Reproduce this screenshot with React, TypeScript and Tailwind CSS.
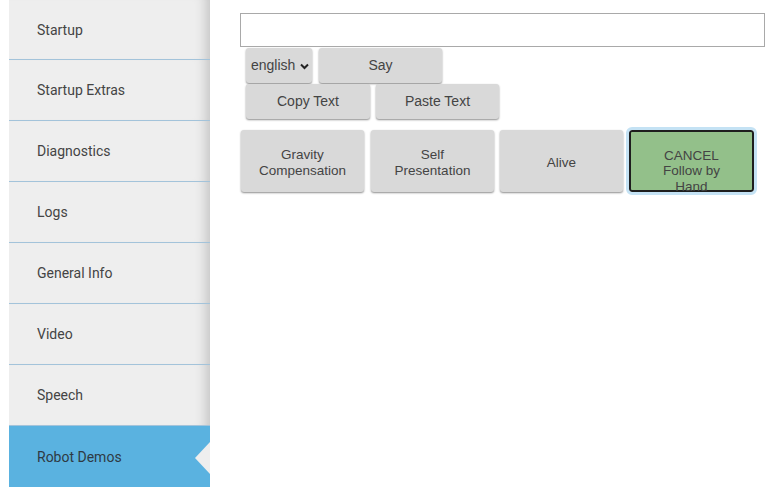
import React from "react";

const items = [
  "Startup",
  "Startup Extras",
  "Diagnostics",
  "Logs",
  "General Info",
  "Video",
  "Speech",
];

const btn =
  "flex items-center justify-center text-center rounded-[3px] bg-[#d9d9d9] text-[#444] text-[13.5px] leading-[15.3px] shadow-[0_1px_2px_rgba(0,0,0,0.45)]";

export default function App() {
  return (
    <div
      className="flex h-[487px] w-[778px] overflow-hidden bg-white"
      style={{ fontFamily: "'Liberation Sans', Arial, sans-serif" }}
    >
      <div className="ml-[9px] flex w-[201px] shrink-0 flex-col bg-[#eeeeee] font-['Roboto',sans-serif] text-[14px] text-[#444]">
        {items.map((t, i) => (
          <div
            key={t}
            className={`flex items-center border-b border-[#a3c3da] pl-[28px] pt-[1px] shadow-[inset_-14px_0_12px_-10px_rgba(0,0,0,0.18)] ${
              i === 0 ? "h-[60px]" : "h-[61px]"
            }`}
          >
            {t}
          </div>
        ))}
        <div className="relative flex flex-1 items-center bg-[#5ab2e0] pl-[28px] pt-[1px] text-[#2f3a44]">
          Robot Demos
          <div className="absolute right-0 top-[16px] h-0 w-0 border-y-[16px] border-r-[15px] border-y-transparent border-r-[#eeeeee]" />
        </div>
      </div>

      <div className="ml-[30px] flex flex-col pt-[13px]">
        <div className="h-[34px] w-[525px] border border-[#a9a9a9] bg-white" />
        <div className="ml-[6px] mt-[1px] flex gap-[7px]">
          <div className={`${btn} h-[35px] w-[66px] gap-[5px] !justify-start pl-[5px] pt-[1px] text-[14px]`}>
            <span>english</span>
            <svg width="9" height="7" viewBox="0 0 9 7">
              <polyline points="1,1.5 4.5,5 8,1.5" fill="none" stroke="#222" strokeWidth="2" />
            </svg>
          </div>
          <div className={`${btn} h-[35px] w-[123px] pt-[1px] text-[14px]`}>Say</div>
        </div>
        <div className="ml-[6px] mt-[1px] flex gap-[6px]">
          <div className={`${btn} h-[35px] w-[124px] pt-[1px] text-[14px]`}>Copy Text</div>
          <div className={`${btn} h-[35px] w-[123px] pt-[1px] text-[14px]`}>Paste Text</div>
        </div>
        <div className="ml-[1px] mt-[11px] flex">
          <div className={`${btn} h-[62px] w-[123px] pt-[3px]`}>
            Gravity
            <br />
            Compensation
          </div>
          <div className={`${btn} ml-[7px] h-[62px] w-[123px] pt-[3px]`}>
            Self
            <br />
            Presentation
          </div>
          <div className={`${btn} ml-[6px] h-[62px] w-[123px] pt-[3px]`}>Alive</div>
          <div className="relative ml-[6px] flex h-[62px] w-[125px] flex-col items-center justify-start rounded-[3px] border-2 border-[#1e1e1e] bg-[#93c08a] pt-[16px] text-center text-[13.5px] leading-[15.3px] text-[#444] outline outline-[3px] outline-[#c4e2f4]">
            <span className="w-[70px]">CANCEL Follow by Hand</span>
          </div>
        </div>
      </div>
    </div>
  );
}
